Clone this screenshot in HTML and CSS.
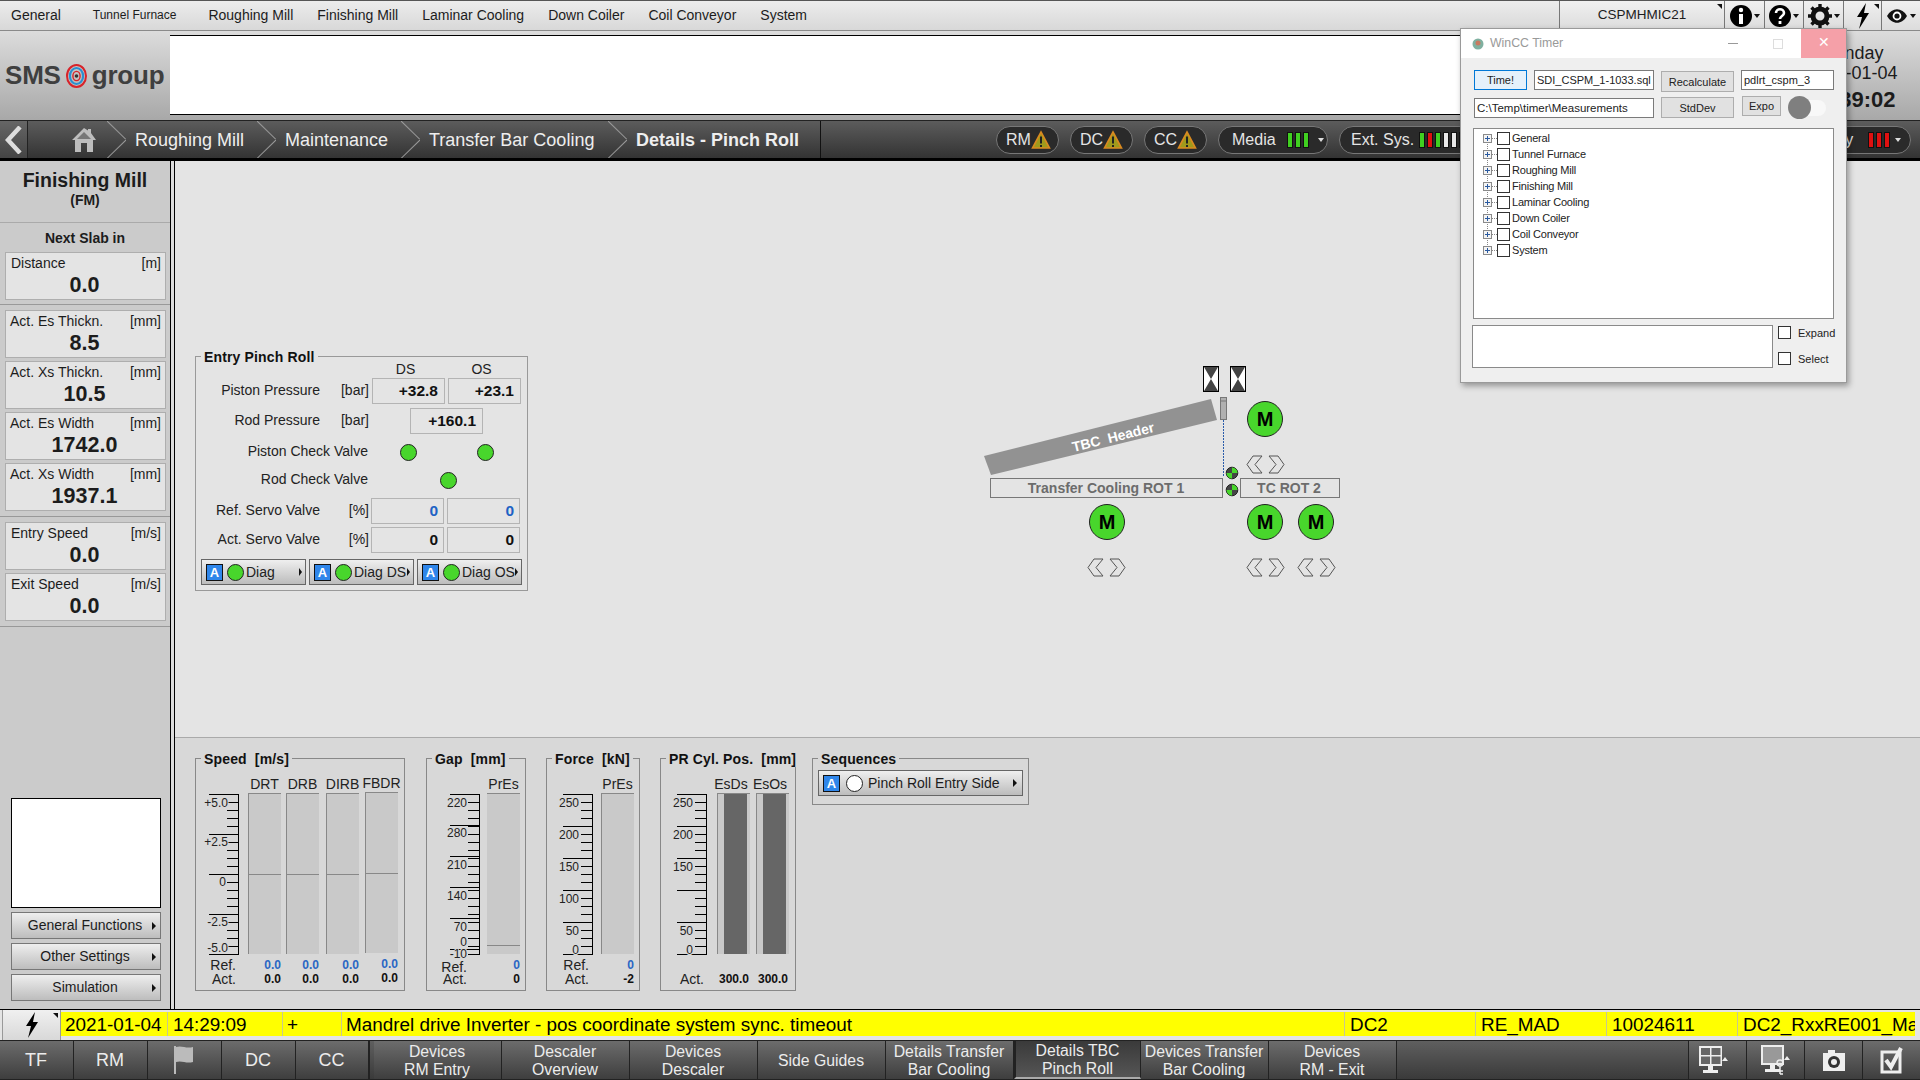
FILE: index.html
```html
<!DOCTYPE html>
<html lang="en">
<head>
<meta charset="utf-8">
<title>Details - Pinch Roll</title>
<link rel="stylesheet" href="styles.css">
</head>
<body>
<div class="app">
  <header class="menubar">
    <nav class="menu">
      <span class="menu-item">General</span>
      <span class="menu-item small">Tunnel Furnace</span>
      <span class="menu-item">Roughing Mill</span>
      <span class="menu-item">Finishing Mill</span>
      <span class="menu-item">Laminar Cooling</span>
      <span class="menu-item">Down Coiler</span>
      <span class="menu-item">Coil Conveyor</span>
      <span class="menu-item">System</span>
    </nav>
    <div class="host">CSPMHMIC21<i class="corner"></i></div>
    <div class="tool w41"><svg width="22" height="24" viewBox="0 0 22 24"><circle cx="11" cy="12" r="11" fill="#000"/><circle cx="11" cy="6" r="2.2" fill="#fff"/><rect x="9" y="10" width="4" height="10" fill="#fff"/></svg><i class="caret-down"></i></div>
    <div class="tool w38"><svg width="22" height="24" viewBox="0 0 22 24"><circle cx="11" cy="12" r="11" fill="#000"/><path d="M7 9c0-5 8-5 8 0 0 3-4 3-4 6" fill="none" stroke="#fff" stroke-width="2.6"/><rect x="9.6" y="17" width="2.8" height="3" fill="#fff"/></svg><i class="caret-down"></i></div>
    <div class="tool w41"><svg width="24" height="24" viewBox="0 0 24 24"><circle cx="12" cy="12" r="7" fill="none" stroke="#111" stroke-width="5"/><path d="M12 0v5M12 19v5M0 12h5M19 12h5M3.5 3.5l3.5 3.5M17 17l3.5 3.5M3.5 20.5L7 17M17 7l3.5-3.5" stroke="#111" stroke-width="3.4"/></svg><i class="caret-down"></i></div>
    <div class="tool w37"><svg width="16" height="26" viewBox="0 0 16 26"><path d="M11 0L2 14h5L4 26 14 10H9z" fill="#000"/></svg><i class="corner"></i></div>
    <div class="tool w38"><svg width="22" height="16" viewBox="0 0 22 16"><path d="M1 8c5-9 15-9 20 0-5 9-15 9-20 0z" fill="#111"/><circle cx="11" cy="8" r="4.4" fill="#fff"/><circle cx="11" cy="8" r="2.6" fill="#111"/></svg><i class="caret-down"></i></div>
  </header>

  <section class="header">
    <div class="logo">
      <span>SMS</span>
      <svg class="logo-mark" width="21" height="24" viewBox="0 0 21 24"><ellipse cx="10.5" cy="12" rx="9.5" ry="11" fill="none" stroke="#d8232a" stroke-width="2"/><ellipse cx="10.5" cy="12" rx="6.6" ry="8" fill="none" stroke="#2b8fd0" stroke-width="2.2"/><ellipse cx="10.5" cy="12" rx="3.6" ry="4.6" fill="none" stroke="#d8232a" stroke-width="1.4"/><circle cx="10.5" cy="12" r="1.8" fill="#333"/></svg>
      <span>group</span>
    </div>
    <div class="banner"></div>
    <div class="clock">
      <div class="clock-line">Monday</div>
      <div class="clock-line">2021-01-04</div>
      <div class="clock-time">14:39:02</div>
    </div>
  </section>

  <nav class="navbar">
    <div class="back"><svg width="18" height="28" viewBox="0 0 18 28"><path d="M15 1L3 14l12 13" fill="none" stroke="#ddd" stroke-width="4.5"/></svg></div>
    <div class="home"><svg width="26" height="26" viewBox="0 0 26 26"><path d="M13 1L1 13h3v12h6v-9h6v9h6V13h3L20 6V2h-3v1.400z" fill="#bdbdbd"/><path d="M13 5L6 12h14z" fill="#777"/></svg></div>
    <div class="crumb c1">Roughing Mill</div>
    <div class="crumb c2">Maintenance</div>
    <div class="crumb c3">Transfer Bar Cooling</div>
    <div class="crumb c4">Details - Pinch Roll</div>
    <div class="pills">
      <div class="pill p-short">RM<svg class="warn" width="20" height="20" viewBox="0 0 20 20"><path d="M10 2l8.500 16h-17z" fill="#a09a1c" stroke="#d98a20" stroke-width="1.600"/><path d="M10 6.500v7M10 15v2" stroke="#222" stroke-width="2"/></svg></div>
      <div class="pill p-short">DC<svg class="warn" width="20" height="20" viewBox="0 0 20 20"><path d="M10 2l8.500 16h-17z" fill="#a09a1c" stroke="#d98a20" stroke-width="1.600"/><path d="M10 6.500v7M10 15v2" stroke="#222" stroke-width="2"/></svg></div>
      <div class="pill p-short">CC<svg class="warn" width="20" height="20" viewBox="0 0 20 20"><path d="M10 2l8.500 16h-17z" fill="#a09a1c" stroke="#d98a20" stroke-width="1.600"/><path d="M10 6.500v7M10 15v2" stroke="#222" stroke-width="2"/></svg></div>
      <div class="pill p-media">Media<span class="leds"><i class="led g"></i><i class="led g"></i><i class="led g"></i></span><i class="caret-white"></i></div>
      <div class="pill p-ext">Ext. Sys.<span class="leds"><i class="led g"></i><i class="led r"></i><i class="led g"></i><i class="led w"></i><i class="led w"></i><i class="led w"></i></span></div>
      <div class="pill p-last">Safety<span class="leds"><i class="led r"></i><i class="led r"></i><i class="led r"></i></span><i class="caret-white"></i></div>
    </div>
  </nav>

  <div class="middle">
    <aside class="sidebar">
      <div class="side-title"><strong>Finishing Mill</strong><b>(FM)</b></div>
      <div class="side-sub">Next Slab in</div>
      <div class="stat s-first"><div class="stat-head ind"><span>Distance</span><span>[m]</span></div><div class="stat-val">0.0</div></div>
      <div class="side-rule"></div>
      <div class="stat"><div class="stat-head"><span>Act. Es Thickn.</span><span>[mm]</span></div><div class="stat-val">8.5</div></div>
      <div class="stat"><div class="stat-head"><span>Act. Xs Thickn.</span><span>[mm]</span></div><div class="stat-val">10.5</div></div>
      <div class="stat"><div class="stat-head"><span>Act. Es Width</span><span>[mm]</span></div><div class="stat-val">1742.0</div></div>
      <div class="stat"><div class="stat-head"><span>Act. Xs Width</span><span>[mm]</span></div><div class="stat-val">1937.1</div></div>
      <div class="side-rule"></div>
      <div class="stat"><div class="stat-head ind"><span>Entry Speed</span><span>[m/s]</span></div><div class="stat-val">0.0</div></div>
      <div class="stat"><div class="stat-head ind"><span>Exit Speed</span><span>[m/s]</span></div><div class="stat-val">0.0</div></div>
      <div class="side-rule"></div>
      <div class="side-spacer"></div>
      <div class="white-box"></div>
      <div class="side-btn">General Functions<i class="caret-right"></i></div>
      <div class="side-btn">Other Settings<i class="caret-right"></i></div>
      <div class="side-btn">Simulation<i class="caret-right"></i></div>
    </aside>
    <div class="split"></div>
    <main class="main">
      <section class="upper">
        <fieldset class="fs entry">
          <legend>Entry Pinch Roll</legend>
          <div class="row r-head"><span class="cell-head">DS</span><span class="cell-head">OS</span></div>
          <div class="row r-val"><span class="lab">Piston Pressure</span><span class="unit">[bar]</span><span class="val">+32.8</span><span class="val">+23.1</span></div>
          <div class="row r-rod"><span class="lab">Rod Pressure</span><span class="unit">[bar]</span><span class="val rod-val">+160.1</span></div>
          <div class="row r-check r-c1"><span class="lab-wide">Piston Check Valve</span><span class="dot d1"></span><span class="dot d2"></span></div>
          <div class="row r-check r-c2"><span class="lab-wide">Rod Check Valve</span><span class="dot d3"></span></div>
          <div class="row r-servo r-s1"><span class="lab lab-s">Ref. Servo Valve</span><span class="unit">[%]</span><span class="val blue">0</span><span class="val blue">0</span></div>
          <div class="row r-servo r-s2"><span class="lab lab-s">Act. Servo Valve</span><span class="unit">[%]</span><span class="val">0</span><span class="val">0</span></div>
          <div class="row r-btns">
            <div class="abtn"><i class="a-icon">A</i><i class="dot"></i><span class="abtn-text">Diag</span><i class="caret-right"></i></div>
            <div class="abtn"><i class="a-icon">A</i><i class="dot"></i><span class="abtn-text">Diag DS</span><i class="caret-right"></i></div>
            <div class="abtn"><i class="a-icon">A</i><i class="dot"></i><span class="abtn-text">Diag OS</span><i class="caret-right"></i></div>
          </div>
        </fieldset>
        <svg class="diagram" width="370" height="225" viewBox="980 360 370 225">
          <defs>
            <g id="chevs">
              <path d="M15 0H6L0 8.500 6 17h9L8 8.500z" fill="none" stroke="#555"/>
              <path d="M22 0h9l6 8.500-6 8.500h-9l7-8.500z" fill="none" stroke="#555"/>
            </g>
            <g id="motor">
              <circle r="17.500" fill="#48d62c" stroke="#222"/>
              <text class="motor-m" y="7" text-anchor="middle">M</text>
            </g>
            <g id="hour">
              <rect x="0.500" y="0.500" width="15" height="25" fill="#fff" stroke="#000"/>
              <path d="M1 1h14L8 13zM1 25h14L8 13z" fill="#444"/>
            </g>
            <g id="ball">
              <circle r="5.800" fill="#444" stroke="#222"/>
              <path d="M0 0V-5.500A5.500 5.500 0 0 1 5.500 0zM0 0V5.500A5.500 5.500 0 0 1-5.500 0z" fill="#48d62c"/>
            </g>
          </defs>
          <use href="#hour" x="1203" y="366"/>
          <use href="#hour" x="1230" y="366"/>
          <rect x="1220.500" y="397.500" width="6" height="22" fill="#b0b0b0" stroke="#777"/>
          <path d="M1220.500 401h6" stroke="#777"/>
          <path d="M1223.500 420v57" stroke="#2a5caa" stroke-dasharray="2 1"/>
          <polygon points="984,456 1211,399 1217,420 991,475" fill="#929292"/>
          <text class="tbc" x="1113" y="442" text-anchor="middle" transform="rotate(-14 1113 437)">TBC  Header</text>
          <use href="#motor" x="1265" y="419"/>
          <use href="#chevs" x="1247" y="456"/>
          <use href="#ball" x="1232" y="473"/>
          <use href="#ball" x="1232" y="490"/>
          <rect class="roller" x="990.500" y="478.500" width="232" height="19"/>
          <rect class="roller" x="1240.500" y="478.500" width="99" height="19"/>
          <text class="roller-text" x="1106" y="493" text-anchor="middle">Transfer Cooling ROT 1</text>
          <text class="roller-text" x="1289" y="493" text-anchor="middle">TC ROT 2</text>
          <use href="#motor" x="1107" y="522"/>
          <use href="#motor" x="1265" y="522"/>
          <use href="#motor" x="1316" y="522"/>
          <use href="#chevs" x="1088" y="559"/>
          <use href="#chevs" x="1247" y="559"/>
          <use href="#chevs" x="1298" y="559"/>
        </svg>
      </section>

      <section class="lower">
        <fieldset class="fs gauge g-speed">
          <legend>Speed&nbsp; [m/s]</legend>
          <div class="gauge-body">
            <div class="ruler-col">
              <svg class="ruler" width="43" height="162" viewBox="0 0 43 162">
                <path class="rl" d="M42.500 1v160"/>
                <line class="tick-mi" x1="37" x2="37" y1="1" y2="162"/>
                <line class="tick-ma" x1="28" x2="28" y1="1" y2="162"/>
                <text class="rt" x="32" y="14">+5.0</text><text class="rt" x="32" y="53">+2.5</text><text class="rt" x="30" y="93">0</text><text class="rt" x="32" y="133">-2.5</text><text class="rt" x="32" y="159">-5.0</text>
              </svg>
              <div class="rowlab">Ref.</div><div class="rowlab">Act.</div>
            </div>
            <div class="bar-col c-speed1"><div class="bar-head">DRT</div><div class="bar zero"></div><div class="ref">0.0</div><div class="act">0.0</div></div>
            <div class="bar-col c-speed2"><div class="bar-head">DRB</div><div class="bar zero"></div><div class="ref">0.0</div><div class="act">0.0</div></div>
            <div class="bar-col c-speed3"><div class="bar-head">DIRB</div><div class="bar zero"></div><div class="ref">0.0</div><div class="act">0.0</div></div>
            <div class="bar-col c-speed4"><div class="bar-head">FBDR</div><div class="bar zero"></div><div class="ref">0.0</div><div class="act">0.0</div></div>
          </div>
        </fieldset>

        <fieldset class="fs gauge g-gap">
          <legend>Gap&nbsp; [mm]</legend>
          <div class="gauge-body">
            <div class="ruler-col">
              <svg class="ruler" width="53" height="162" viewBox="0 0 53 162">
                <path class="rl" d="M52.500 1v160"/>
                <line class="tick-mi" x1="47" x2="47" y1="1" y2="162"/>
                <line class="tick-gap" x1="38" x2="38" y1="1" y2="162"/>
                <text class="rt" x="40" y="14">220</text><text class="rt" x="40" y="44">280</text><text class="rt" x="40" y="76">210</text><text class="rt" x="40" y="107">140</text><text class="rt" x="40" y="138">70</text><text class="rt" x="40" y="153">0</text><text class="rt" x="40" y="165">-10</text>
              </svg>
              <div class="rowlab lab-low">Ref.</div><div class="rowlab lab-tight">Act.</div>
            </div>
            <div class="bar-col c-gap"><div class="bar-head">PrEs</div><div class="bar low"></div><div class="ref">0</div><div class="act">0</div></div>
          </div>
        </fieldset>

        <fieldset class="fs gauge g-force">
          <legend>Force&nbsp; [kN]</legend>
          <div class="gauge-body">
            <div class="ruler-col">
              <svg class="ruler" width="46" height="162" viewBox="0 0 46 162">
                <path class="rl" d="M45.500 1v160"/>
                <line class="tick-mi" x1="40" x2="40" y1="1" y2="162"/>
                <line class="tick-ma32" x1="31" x2="31" y1="1" y2="162"/>
                <text class="rt" x="32" y="14">250</text><text class="rt" x="32" y="46">200</text><text class="rt" x="32" y="78">150</text><text class="rt" x="32" y="110">100</text><text class="rt" x="32" y="142">50</text><text class="rt" x="32" y="161">0</text>
              </svg>
              <div class="rowlab">Ref.</div><div class="rowlab">Act.</div>
            </div>
            <div class="bar-col c-force"><div class="bar-head">PrEs</div><div class="bar"></div><div class="ref">0</div><div class="act">-2</div></div>
          </div>
        </fieldset>

        <fieldset class="fs gauge g-cyl">
          <legend>PR Cyl. Pos.&nbsp; [mm]</legend>
          <div class="gauge-body">
            <div class="ruler-col">
              <svg class="ruler" width="46" height="162" viewBox="0 0 46 162">
                <path class="rl" d="M45.500 1v160"/>
                <line class="tick-mi" x1="40" x2="40" y1="1" y2="162"/>
                <line class="tick-ma32" x1="31" x2="31" y1="1" y2="162"/>
                <text class="rt" x="32" y="14">250</text><text class="rt" x="32" y="46">200</text><text class="rt" x="32" y="78">150</text><text class="rt" x="32" y="142">50</text><text class="rt" x="32" y="161">0</text>
              </svg>
              <div class="rowlab">&nbsp;</div><div class="rowlab">Act.</div>
            </div>
            <div class="bar-col c-cyl1"><div class="bar-head">EsDs</div><div class="bar full"></div><div class="ref">&nbsp;</div><div class="act">300.0</div></div>
            <div class="bar-col c-cyl2"><div class="bar-head">EsOs</div><div class="bar full"></div><div class="ref">&nbsp;</div><div class="act">300.0</div></div>
          </div>
        </fieldset>

        <fieldset class="fs g-seq">
          <legend>Sequences</legend>
          <div class="abtn seq-btn"><i class="a-icon">A</i><i class="dot dot-white"></i><span class="abtn-text">Pinch Roll Entry Side</span><i class="caret-right"></i></div>
        </fieldset>
      </section>
    </main>
  </div>

  <section class="alarm">
    <div class="alarm-btn"><svg width="16" height="26" viewBox="0 0 16 26"><path d="M11 0L2 14h5L4 26 14 10H9z" fill="#000"/></svg><i class="corner"></i></div>
    <div class="alarm-row">
      <span class="ac a-date">2021-01-04</span>
      <span class="ac a-time">14:29:09</span>
      <span class="ac a-sign">+</span>
      <span class="ac a-msg">Mandrel drive Inverter - pos coordinate system sync. timeout</span>
      <span class="ac a-src">DC2</span>
      <span class="ac a-src">RE_MAD</span>
      <span class="ac a-src">10024611</span>
      <span class="ac a-last">DC2_RxxRE001_Ma</span>
    </div>
  </section>

  <footer class="tabs">
    <div class="tab short">TF</div>
    <div class="tab short">RM</div>
    <div class="tab short"><svg width="22" height="30" viewBox="0 0 22 30"><path d="M2 1v28" stroke="#bbb" stroke-width="2"/><path d="M3 2c6-2 10 2 17 0v15c-7 2-11-2-17 0z" fill="#bbb"/></svg></div>
    <div class="tab short">DC</div>
    <div class="tab short cc">CC</div>
    <div class="tab wide">Devices<br>RM Entry</div>
    <div class="tab wide">Descaler<br>Overview</div>
    <div class="tab wide">Devices<br>Descaler</div>
    <div class="tab wide">Side Guides</div>
    <div class="tab wide">Details Transfer<br>Bar Cooling</div>
    <div class="tab wide active">Details TBC<br>Pinch Roll</div>
    <div class="tab wide">Devices Transfer<br>Bar Cooling</div>
    <div class="tab wide">Devices<br>RM - Exit</div>
    <div class="tab-fill"></div>
    <div class="tab icon icon-first"><svg width="32" height="30" viewBox="0 0 32 30"><path d="M1 1h23v20H1z" fill="#eee"/><path d="M3 3h9v7H3zM13.500 3h9v7h-9zM3 11.500h9V19H3zM13.500 11.500h9V19h-9z" fill="#666"/><path d="M10 21h5v4h5v3H5v-3h5z" fill="#eee"/><path d="M27 12l3 4h-6z" fill="#eee"/></svg></div>
    <div class="tab icon"><svg width="32" height="32" viewBox="0 0 32 32"><path d="M1 1h23v20H1z" fill="#eee"/><path d="M3 3h19v16H3z" fill="#999"/><path d="M10 21h5v4h5v3H5v-3h5z" fill="#eee"/><circle cx="20" cy="19" r="3" fill="none" stroke="#eee" stroke-width="1.500"/><path d="M20 22v8M20 27h3M20 30h3" stroke="#eee" stroke-width="1.500"/><path d="M27 12l3 4h-6z" fill="#eee"/></svg></div>
    <div class="tab icon"><svg width="24" height="24" viewBox="0 0 24 24"><path d="M1 5h5V2h7v3h10v18H1z" fill="#eee"/><circle cx="12" cy="14" r="6" fill="#333"/><circle cx="12" cy="14" r="3" fill="#eee"/></svg></div>
    <div class="tab icon"><svg width="24" height="28" viewBox="0 0 24 28"><rect x="2" y="6" width="18" height="20" fill="none" stroke="#eee" stroke-width="3"/><path d="M6 14l5 7L21 2" fill="none" stroke="#eee" stroke-width="4"/></svg></div>
  </footer>

  <section class="window">
    <div class="win-title">
      <svg width="14" height="14" viewBox="0 0 14 14"><circle cx="7" cy="7" r="5.500" fill="#7fb0a0"/><circle cx="7" cy="6" r="2.500" fill="#c87a60"/></svg>
      <span class="win-name">WinCC Timer</span>
      <span class="win-min"></span>
      <span class="win-max"></span>
      <span class="win-close">✕</span>
    </div>
    <div class="win-row wr1">
      <div class="wbtn primary w-time">Time!</div>
      <div class="wfield w-sql">SDI_CSPM_1-1033.sql</div>
      <div class="wbtn w-calc">Recalculate</div>
      <div class="wfield w-db">pdlrt_cspm_3</div>
    </div>
    <div class="win-row wr2">
      <div class="wfield w-path">C:\Temp\timer\Measurements</div>
      <div class="wbtn w-calc">StdDev</div>
      <div class="wbtn w-expo">Expo</div>
      <div class="toggle"><i class="knob"></i></div>
    </div>
    <div class="tree">
      <div class="tree-row"><i class="plus"></i><i class="branch"></i><i class="cb"></i><span>General</span></div>
      <div class="tree-row"><i class="plus"></i><i class="branch"></i><i class="cb"></i><span>Tunnel Furnace</span></div>
      <div class="tree-row"><i class="plus"></i><i class="branch"></i><i class="cb"></i><span>Roughing Mill</span></div>
      <div class="tree-row"><i class="plus"></i><i class="branch"></i><i class="cb"></i><span>Finishing Mill</span></div>
      <div class="tree-row"><i class="plus"></i><i class="branch"></i><i class="cb"></i><span>Laminar Cooling</span></div>
      <div class="tree-row"><i class="plus"></i><i class="branch"></i><i class="cb"></i><span>Down Coiler</span></div>
      <div class="tree-row"><i class="plus"></i><i class="branch"></i><i class="cb"></i><span>Coil Conveyor</span></div>
      <div class="tree-row"><i class="plus"></i><i class="branch"></i><i class="cb"></i><span>System</span></div>
    </div>
    <div class="win-bottom">
      <div class="note"></div>
      <div class="checks">
        <label class="chk"><i class="cb"></i>Expand</label>
        <label class="chk"><i class="cb"></i>Select</label>
      </div>
    </div>
  </section>
</div>
</body>
</html>
```

FILE: styles.css
```css
* { box-sizing: border-box; }
html, body { margin: 0; padding: 0; }
body { font-family: "Liberation Sans", Arial, sans-serif; color: #1c1c1c; background: #d8d8d8; }
i { display: block; font-style: normal; }
.app { position: relative; width: 1920px; height: 1080px; overflow: hidden; display: flex; flex-direction: column; }

/* top menu */
.menubar { height: 31px; display: flex; background: linear-gradient(#ececec, #d8d8d8); border-bottom: 1px solid #8a8a8a; border-top: 1px solid #555; }
.menu { flex: 1; display: flex; align-items: center; padding: 0 0 2px 11px; gap: 24px; font-size: 14px; }
.menu-item.small { font-size: 12px; margin: 0 8px; }
.host { width: 165px; position: relative; display: flex; align-items: center; justify-content: center; font-size: 13.500px; background: linear-gradient(#f0f0f0, #dcdcdc); border-left: 1px solid #777; padding: 0 0 2px 0; }
.tool { position: relative; display: flex; align-items: center; justify-content: center; gap: 2px; border-left: 1px solid #777; background: linear-gradient(#f0f0f0, #dcdcdc); }
.w41 { width: 40px; } .w38 { width: 39px; } .w37 { width: 38px; }
.corner { position: absolute; right: 2px; top: 3px; width: 0; height: 0; border-top: 5px solid #111; border-left: 5px solid transparent; }
.caret-down { width: 0; height: 0; border-top: 4px solid #111; border-left: 3px solid transparent; border-right: 3px solid transparent; }

/* header */
.header { height: 89px; display: flex; background: linear-gradient(#dcdcdc, #a8a8a8); }
.logo { width: 170px; display: flex; align-items: center; padding: 0 0 0 5px; font-size: 26px; font-weight: bold; color: #3f3f3f; letter-spacing: -.2px; gap: 5px; }
.logo-mark { flex: none; }
.banner { width: 1630px; height: 80px; margin-top: 4px; background: #fff; border-top: 1px solid #000; border-bottom: 1px solid #000; }
.clock { flex: 1; margin-left: -17px; padding-top: 12px; text-align: center; font-size: 18px; white-space: nowrap; }
.clock-line { height: 20px; line-height: 20px; }
.clock-time { font-size: 22px; font-weight: bold; line-height: 30px; margin-top: 2px; }

/* breadcrumb bar */
.navbar { height: 41px; display: flex; background: linear-gradient(#5c5c5c, #333); border-top: 1px solid #222; border-bottom: 3px solid #000; color: #eee; font-size: 18px; }
.back { width: 28px; display: flex; align-items: center; justify-content: center; border-right: 1px solid #222; background: linear-gradient(#666, #444); }
.home { width: 79px; padding-left: 42px; display: flex; align-items: center; }
.home svg { margin-left: 1px; }
.crumb { position: relative; display: flex; align-items: center; padding: 2px 12px 0 28px; white-space: nowrap; }
.crumb::before { content: ""; position: absolute; left: 0; top: 0; width: 19px; height: 100%; background: linear-gradient(to top right, transparent calc(50% - 1px), #999 50%, transparent calc(50% + 1px)) left top / 100% 50% no-repeat, linear-gradient(to bottom right, transparent calc(50% - 1px), #999 50%, transparent calc(50% + 1px)) left bottom / 100% 50% no-repeat; }
.crumb.c1 { width: 150px; } .crumb.c2 { width: 144px; } .crumb.c3 { width: 207px; }
.crumb.c4 { width: 213px; font-weight: bold; border-right: 1px solid #111; }
.pills { flex: 1; display: flex; align-items: center; gap: 11px; padding-left: 175px; }
.pill { height: 28px; display: flex; align-items: center; flex: none; border-radius: 14px; background: #2a2a2a; border: 1px solid #777; font-size: 16px; padding-left: 11px; color: #e4e4e4; }
.p-short { width: 63px; gap: 0; padding-left: 9px; }
.p-short .warn { margin-left: 0; }
.p-media { width: 110px; gap: 11px; padding-left: 13px; }
.p-ext { width: 180px; gap: 5px; padding-left: 11px; }
.p-last { width: 137px; margin-left: 244px; gap: 15px; padding-left: 33px; }
.leds { display: flex; gap: 2px; }
.led { width: 6px; height: 16px; border: 1px solid #111; }
.led.g { background: #40d020; } .led.r { background: #e01010; } .led.w { background: #e8e8e8; }
.caret-white { width: 0; height: 0; border-top: 4px solid #ddd; border-left: 3.500px solid transparent; border-right: 3.500px solid transparent; margin-left: -2px; }
.p-last .caret-white { margin-left: -10px; }

/* layout */
.middle { flex: 1; min-height: 0; display: flex; }
.sidebar { width: 170px; background: #cbcbcb; display: flex; flex-direction: column; padding-bottom: 8px; }
.split { width: 5px; background: #dcdcdc; border-left: 1px solid #000; border-right: 1px solid #000; }
.main { flex: 1; display: flex; flex-direction: column; }

/* sidebar */
.side-title { height: 62px; display: flex; flex-direction: column; align-items: center; border-bottom: 1px solid #aaa; padding-top: 8px; }
.side-title strong { font-size: 19.500px; line-height: 22px; }
.side-title b { font-size: 14px; line-height: 18px; }
.side-sub { height: 29px; line-height: 31px; text-align: center; font-size: 14px; font-weight: bold; }
.stat { height: 48px; margin: 0 4px 3px 5px; background: #e4e4e4; border: 1px solid #aeaeae; flex: none; }
.stat.s-first { margin-bottom: 0; }
.stat-head { display: flex; justify-content: space-between; font-size: 14px; line-height: 16px; padding: 2px 4px 0 4px; }
.stat-head.ind { padding-left: 5px; }
.stat-val { text-align: center; font-size: 21.500px; font-weight: bold; line-height: 26px; margin-top: 1px; padding-right: 2px; }
.side-rule { height: 1px; background: #999; margin: 4px 0 5px; flex: none; }
.stat + .side-rule { margin-top: 2px; }
.s-first + .side-rule { margin-top: 4px; }
.side-spacer { flex: 1; }
.white-box { height: 110px; margin: 0 9px 4px 11px; background: #fff; border: 1px solid #000; }
.side-btn { position: relative; height: 27px; margin: 0 9px 4px 11px; border: 1px solid #777; background: linear-gradient(#eee, #bdbdbd); display: flex; align-items: center; justify-content: center; font-size: 14px; padding: 0 2px 2px 0; }
.side-btn:last-child { margin-bottom: 0; }
.caret-right { width: 0; height: 0; border-left: 4px solid #111; border-top: 4px solid transparent; border-bottom: 4px solid transparent; flex: none; }
.side-btn .caret-right { position: absolute; right: 4px; top: 9px; }

/* fieldsets */
.fs { margin: 0; padding: 0; border: 1px solid #999; min-width: 0; flex: none; }
.fs legend { margin-left: 5px; padding: 2px 3px 0; font-size: 14px; font-weight: bold; line-height: 16px; white-space: nowrap; color: #111; letter-spacing: .15px; }

/* upper */
.upper { height: 577px; display: flex; align-items: flex-start; padding: 186px 0 0 20px; background: #e4e4e4; border-bottom: 1px solid #aaa; }
.entry { width: 333px; height: 244px; }
.diagram { margin: 13px 0 0 452px; flex: none; display: block; }
.motor-m { font: bold 20px "Liberation Sans", Arial, sans-serif; fill: #000; }
.tbc { font: bold 14px "Liberation Sans", Arial, sans-serif; fill: #fff; white-space: pre; }
.roller { fill: #e4e4e4; stroke: #777; }
.roller-text { font: bold 14px "Liberation Sans", Arial, sans-serif; fill: #6c6c6c; }

.row { display: flex; align-items: center; padding-left: 5px; font-size: 14px; color: #222; }
.r-head { height: 18px; margin-top: -5px; padding-left: 173px; gap: 3px; }
.cell-head { width: 73px; text-align: center; }
.r-val, .r-rod { height: 26px; }
.r-rod { margin-top: 4px; }
.lab { width: 119px; text-align: right; white-space: nowrap; margin-bottom: 2px; }
.unit { width: 49px; text-align: right; white-space: nowrap; margin: 0 3px 2px 0; }
.val { width: 73px; height: 26px; margin-right: 3px; border: 1px solid #b4b4b4; font-size: 15.500px; font-weight: bold; text-align: right; line-height: 23px; padding-right: 6px; color: #111; }
.val.blue { color: #1d62c4; }
.rod-val { margin-left: 38px; }
.r-check { height: 24px; }
.r-c1 { margin-top: 6px; } .r-c2 { margin-top: 4px; }
.lab-wide { width: 167px; text-align: right; margin-bottom: 2px; }
.dot { width: 17px; height: 17px; border-radius: 50%; background: #48d62c; border: 1px solid #222; flex: none; }
.d1 { margin-left: 32px; } .d2 { margin-left: 60px; } .d3 { margin-left: 72px; }
.r-servo { height: 26px; }
.r-s1 { margin-top: 6px; } .r-s2 { margin-top: 3px; }
.lab-s { width: 119px; }
.r-servo .val { margin-right: 3px; padding-right: 5px; }
.r-servo .unit { margin-right: 2px; }
.r-btns { margin-top: 6px; gap: 3px; }
.abtn { position: relative; width: 105px; height: 26px; display: flex; align-items: center; gap: 4px; padding-left: 4px; border: 1px solid #666; background: linear-gradient(#efefef, #bcbcbc); font-size: 14px; white-space: nowrap; }
.a-icon { width: 17px; height: 17px; background: #2f86ea; border: 1px solid #111; color: #fff; font-weight: bold; font-size: 13px; line-height: 16px; text-align: center; flex: none; }
.abtn .dot { margin-right: -3px; }
.abtn .abtn-text { margin-left: 1px; }
.abtn .caret-right { position: absolute; right: 3px; top: 8px; border-left-width: 3px; }

/* lower */
.lower { flex: 1; display: flex; padding: 11px 0 0 20px; background: #d8d8d8; align-items: flex-start; }
.gauge { height: 242px; border-color: #888; }
.g-speed { width: 210px; } .g-gap { width: 100px; margin-left: 21px; } .g-force { width: 94px; margin-left: 20px; } .g-cyl { width: 136px; margin-left: 20px; }
.g-seq { width: 217px; height: 56px; margin-left: 16px; border-color: #888; }
.gauge-body { display: flex; padding-top: 9px; }
.ruler-col { flex: none; display: flex; flex-direction: column; padding-top: 17px; }
.ruler { display: block; overflow: visible; margin-bottom: 3px; }
.rl { stroke: #000; fill: none; }
.tick-mi { stroke: #000; stroke-width: 12; stroke-dasharray: 1 7; }
.tick-ma { stroke: #000; stroke-width: 30; stroke-dasharray: 1 39; }
.tick-ma32 { stroke: #000; stroke-width: 30; stroke-dasharray: 1 31; }
.tick-gap { stroke: #000; stroke-width: 30; stroke-dasharray: 1 30; }
.rt { font: 12px "Liberation Sans", Arial, sans-serif; text-anchor: end; fill: #222; paint-order: stroke; stroke: #d8d8d8; stroke-width: 2px; }
.rowlab { height: 14px; line-height: 14px; font-size: 14px; text-align: right; color: #222; }
.g-speed .rowlab { padding-right: 3px; }
.g-gap .rowlab { padding-right: 13px; }
.g-force .rowlab { padding-right: 4px; }
.g-cyl .rowlab { padding-right: 3px; }
.lab-low { margin-top: 2px; }
.lab-tight { margin-top: -2px; }
.bar-col { flex: none; width: 33px; display: flex; flex-direction: column; align-items: stretch; }
.bar-head { height: 17px; line-height: 16px; font-size: 14px; text-align: center; white-space: nowrap; display: flex; justify-content: center; color: #222; }
.bar { position: relative; height: 161px; background: #c9c9c9; border-left: 1px solid #888; border-top: 1px solid #888; margin-bottom: 4px; }
.bar.zero::after { content: ""; position: absolute; left: 0; right: 0; top: 80px; height: 1px; background: #888; }
.bar.low { border-left: 0; }
.bar.low::after { content: ""; position: absolute; left: 0; right: 0; top: 151px; height: 1px; background: #888; }
.bar.full { background: linear-gradient(to right, #c9c9c9 6px, #666 6px, #666 29px, #c9c9c9 29px); }
.ref, .act { height: 14px; line-height: 14px; font-size: 12px; font-weight: bold; text-align: right; white-space: nowrap; }
.ref { color: #2a66c4; }
.act { color: #111; }
.c-speed1 { margin-left: 9px; } .c-speed2 { margin-left: 5px; } .c-speed3 { margin-left: 7px; }
.c-speed4 { margin-left: 6px; margin-top: -1px; }
.c-gap { margin-left: 7px; } .c-force { margin-left: 8px; }
.c-cyl1 { margin-left: 10px; } .c-cyl2 { margin-left: 6px; }
.c-cyl1 .bar-head, .c-cyl2 .bar-head { padding-right: 5px; }
.c-cyl1 .act, .c-cyl2 .act { padding-right: 1px; }
.seq-btn { width: 205px; height: 26px; margin: 3px 0 0 5px; gap: 6px; padding-left: 4px; }
.seq-btn .dot { margin-right: -2px; }
.dot-white { background: #fff; }
.seq-btn .caret-right { right: 5px; border-left-width: 4px; border-top-width: 4px; border-bottom-width: 4px; top: 8px; }

/* alarm */
.alarm { height: 32px; display: flex; background: #e4e4e4; border-top: 1px solid #000; border-bottom: 1px solid #222; flex: none; }
.alarm-btn { position: relative; width: 59px; margin-left: 2px; display: flex; align-items: center; justify-content: center; background: linear-gradient(#f0f0f0, #d8d8d8); border-left: 1px solid #999; border-right: 1px solid #999; }
.alarm-row { flex: 1; display: flex; margin-right: 5px; margin-top: 2px; height: 24px; background: #ff0; font-size: 18.900px; line-height: 25px; color: #000; overflow: hidden; }
.ac { flex: none; padding-left: 4px; border-right: 1px solid #c8c890; white-space: nowrap; overflow: hidden; }
.a-date { width: 107px; } .a-time { width: 115px; padding-left: 5px; } .a-sign { width: 59px; padding-left: 4px; } .a-msg { width: 1003px; padding-left: 4px; }
.a-src { width: 131px; padding-left: 5px; }
.a-last { flex: 1; border: 0; padding-left: 5px; }

/* bottom tabs */
.tabs { height: 39px; flex: none; display: flex; background: linear-gradient(#5f5f5f, #3a3a3a); color: #ececec; border-bottom: 1px solid #222; }
.tab { display: flex; align-items: center; justify-content: center; text-align: center; flex: none; background: linear-gradient(#6c6c6c, #3e3e3e); border-right: 1px solid #222; }
.short { width: 74px; font-size: 18px; padding-right: 1px; }
.short.cc { margin-right: 4px; border-right: 2px solid #222; }
.wide { width: 128px; font-size: 15.800px; line-height: 18px; padding: 1px 1px 0 0; white-space: nowrap; }
.wide.active { background: linear-gradient(#3a3a3a, #555); border-bottom: 2px solid #aaa; border-left: 2px solid #222; width: 127px; }
.tab-fill { flex: 1; }
.icon { width: 58px; border-left: 1px solid #222; border-right: 0; }
.icon-first svg { margin-right: 7px; }

/* timer window */
.window { position: absolute; left: 1460px; top: 28px; width: 387px; height: 355px; background: #efefef; border: 1px solid #9a9a9a; box-shadow: 2px 3px 6px rgba(0,0,0,.35); font-size: 11px; color: #222; }
.win-title { height: 29px; background: #fff; display: flex; align-items: center; padding-left: 10px; color: #999; font-size: 12.300px; }
.win-name { margin: 0 0 2px 5px; flex: 1; }
.win-min { width: 10px; height: 1px; background: #999; margin-right: 35px; }
.win-max { width: 10px; height: 10px; border: 1px solid #ddd; margin-right: 18px; }
.win-close { width: 45px; height: 29px; background: #f5a0a8; color: #fff; font-size: 14px; text-align: center; line-height: 27px; }
.win-row { display: flex; margin-left: 13px; align-items: flex-start; gap: 7px; }
.wr1 { margin-top: 12px; height: 20px; }
.wr2 { margin-top: 8px; height: 20px; }
.wbtn { height: 21px; line-height: 20px; text-align: center; border: 1px solid #adadad; background: #e1e1e1; }
.wfield { height: 20px; line-height: 18px; padding-left: 2px; border: 1px solid #7a7a7a; background: #fff; white-space: nowrap; overflow: hidden; }
.primary { height: 20px; background: #e5f1fb; border-color: #0078d7; line-height: 19px; }
.w-time { width: 53px; } .w-sql { width: 120px; }
.w-calc { width: 73px; margin-top: 1px; }
.wr2 .w-calc { margin-top: -1px; }
.w-db { width: 93px; }
.w-path { width: 180px; font-size: 11.500px; }
.w-expo { width: 39px; margin: -2px 0 0 1px; height: 20px; line-height: 18px; }
.toggle { position: relative; width: 38px; height: 16px; margin: 2px 0 0 0; border-radius: 8px; background: #f8f8f8; }
.knob { position: absolute; left: 0; top: -4px; width: 23px; height: 23px; border-radius: 50%; background: #7f7f7f; }
.tree { position: relative; width: 361px; height: 191px; margin: 10px 0 0 12px; background: #fff; border: 1px solid #8a8a8a; padding-top: 1px; }
.tree::before { content: ""; position: absolute; left: 13px; top: 10px; height: 112px; border-left: 1px dotted #888; }
.tree-row { position: relative; height: 16px; display: flex; align-items: center; padding-left: 9px; }
.plus { position: relative; width: 9px; height: 9px; border: 1px solid #8a8a8a; background: linear-gradient(#2a5aa0, #2a5aa0) center / 5px 1px no-repeat, linear-gradient(#2a5aa0, #2a5aa0) center / 1px 5px no-repeat, #f4f4f4; }
.branch { width: 5px; border-top: 1px dotted #888; }
.cb { width: 13px; height: 13px; border: 1px solid #333; background: #fff; flex: none; }
.tree-row span { margin-left: 2px; white-space: nowrap; letter-spacing: -.2px; }
.win-bottom { display: flex; margin: 6px 0 0 11px; }
.note { width: 301px; height: 43px; background: #fff; border: 1px solid #8a8a8a; }
.checks { margin-left: 5px; padding-top: 1px; display: flex; flex-direction: column; gap: 13px; }
.chk { display: flex; align-items: center; gap: 7px; height: 13px; }
```
